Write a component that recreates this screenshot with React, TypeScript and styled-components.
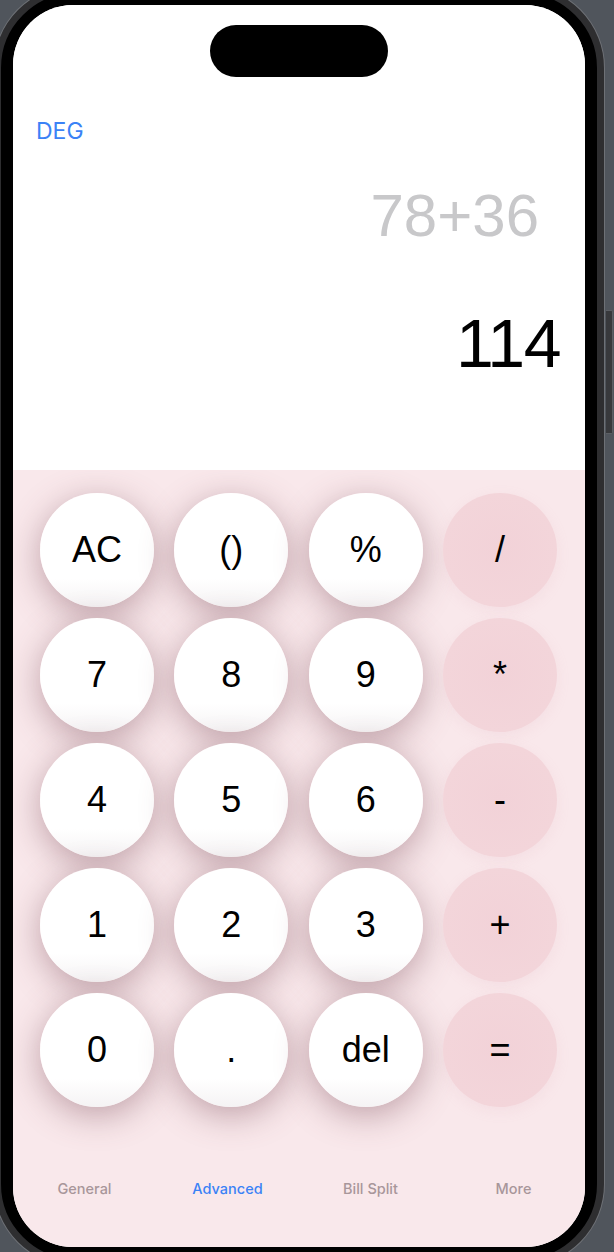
import React from "react";
import styled, { createGlobalStyle } from "styled-components";

const Global = createGlobalStyle`
  html, body { margin: 0; padding: 0; }
  body {
    background: #50555c;
    width: 614px;
    height: 1252px;
    overflow: hidden;
    font-family: "Liberation Sans", Arial, sans-serif;
  }
  #root { width: 614px; height: 1252px; overflow: hidden; }
`;

const Device = styled.div`
  position: relative;
  box-sizing: border-box;
  width: 610px;
  margin: -14px 0 0 -6px;
  padding: 12px;
  background: #000;
  border: 7px solid #2e2e30;
  border-radius: 82px;
  box-shadow: 0 0 0 1px #6e7176;
`;

const SideButton = styled.div`
  position: absolute;
  right: -16px;
  top: 317px;
  width: 6px;
  height: 122px;
  background: #38393c;
  border: 1px solid #5c5f64;
  border-left: none;
  border-radius: 0 2px 2px 0;
`;

const Screen = styled.div`
  display: flex;
  flex-direction: column;
  height: 1242px;
  border-radius: 60px;
  overflow: hidden;
  background: #fff;
`;

const Header = styled.div`
  display: flex;
  flex-direction: column;
  height: 465px;
  flex-shrink: 0;
  box-sizing: border-box;
  padding: 20px 0 0 23px;
  background: #fff;
  position: relative;
  z-index: 1;
`;

const Island = styled.div`
  align-self: center;
  margin-left: -23px;
  width: 178px;
  height: 52px;
  border-radius: 26px;
  background: #000;
`;

const ModeLabel = styled.div`
  margin-top: 41px;
  font-family: Inter, "Liberation Sans", sans-serif;
  font-size: 23px;
  line-height: 26px;
  color: #3b82f6;
`;

const Expression = styled.div`
  margin-top: 42px;
  padding-right: 46px;
  text-align: right;
  font-size: 60px;
  line-height: 1;
  color: #c8c8ca;
`;

const Result = styled.div`
  margin-top: 63px;
  padding-right: 25px;
  text-align: right;
  font-size: 68px;
  line-height: 1;
  letter-spacing: -1.5px;
  color: #000;
`;

const Pad = styled.div`
  flex: 1;
  display: flex;
  flex-direction: column;
  background: #f9e8eb;
`;

const Keys = styled.div`
  display: grid;
  grid-template-columns: repeat(4, 114px);
  justify-content: space-between;
  row-gap: 11px;
  padding: 23px 28px 0 27px;
`;

const Key = styled.button<{ $op?: boolean }>`
  width: 114px;
  height: 114px;
  border: none;
  border-radius: 50%;
  padding: 0;
  display: flex;
  align-items: center;
  justify-content: center;
  font-family: "Liberation Sans", Arial, sans-serif;
  font-size: 36px;
  color: #000;
  background: ${(p) =>
    p.$op
      ? "radial-gradient(circle at 50% 50%, #f2d2d8 0%, #f3d5da 70%, #f5dade 100%)"
      : "linear-gradient(180deg, #ffffff 0%, #ffffff 75%, #f5f3f4 100%)"};
  box-shadow: ${(p) =>
    p.$op
      ? "0 4px 14px rgba(210, 160, 170, 0.12)"
      : "0 8px 34px rgba(120, 70, 85, 0.45)"};
`;

const Tabs = styled.div`
  display: grid;
  grid-template-columns: repeat(4, 1fr);
  margin-top: 73px;
`;

const Tab = styled.div<{ $active?: boolean }>`
  text-align: center;
  font-family: Inter, "Liberation Sans", sans-serif;
  font-size: 14.5px;
  font-weight: 500;
  line-height: 18px;
  color: ${(p) => (p.$active ? "#3b82f6" : "#a8969a")};
`;

const keys: { label: string; op?: boolean }[] = [
  { label: "AC" },
  { label: "()" },
  { label: "%" },
  { label: "/", op: true },
  { label: "7" },
  { label: "8" },
  { label: "9" },
  { label: "*", op: true },
  { label: "4" },
  { label: "5" },
  { label: "6" },
  { label: "-", op: true },
  { label: "1" },
  { label: "2" },
  { label: "3" },
  { label: "+", op: true },
  { label: "0" },
  { label: "." },
  { label: "del" },
  { label: "=", op: true },
];

const tabs = ["General", "Advanced", "Bill Split", "More"];

export default function App() {
  return (
    <>
      <Global />
      <Device>
        <SideButton />
        <Screen>
          <Header>
            <Island />
            <ModeLabel>DEG</ModeLabel>
            <Expression>78+36</Expression>
            <Result>114</Result>
          </Header>
          <Pad>
            <Keys>
              {keys.map((k) => (
                <Key key={k.label} $op={k.op}>
                  {k.label}
                </Key>
              ))}
            </Keys>
            <Tabs>
              {tabs.map((t) => (
                <Tab key={t} $active={t === "Advanced"}>
                  {t}
                </Tab>
              ))}
            </Tabs>
          </Pad>
        </Screen>
      </Device>
    </>
  );
}
